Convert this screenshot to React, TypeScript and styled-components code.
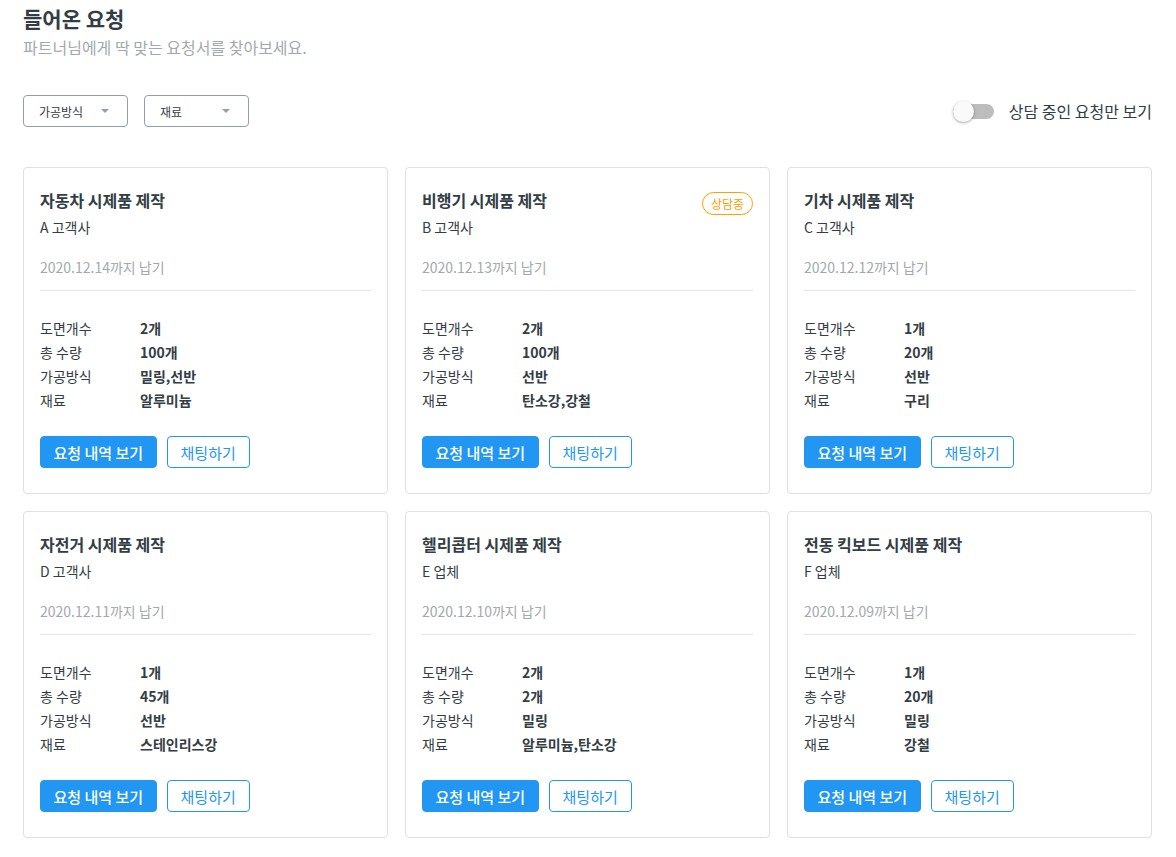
import React from "react";
import styled, { createGlobalStyle } from "styled-components";

const Global = createGlobalStyle`
  html, body { margin: 0; padding: 0; background: #fff; }
  body { font-family: "Noto Sans CJK KR", "Noto Sans", sans-serif; color: #323d45; }
  * { box-sizing: border-box; }
`;

const Page = styled.div`
  padding: 2px 24px 20px 23px;
`;

const Title = styled.h1`
  margin: 0;
  font-size: 21px;
  line-height: 32px;
  font-weight: 700;
  color: #323d45;
`;

const Subtitle = styled.p`
  margin: 0;
  font-size: 16px;
  line-height: 26px;
  color: #a2a9ad;
`;

const Toolbar = styled.div`
  display: flex;
  align-items: center;
  justify-content: space-between;
  margin-top: 35px;
`;

const Filters = styled.div`
  display: flex;
  gap: 16px;
`;

const Select = styled.div`
  width: 105px;
  height: 32px;
  border: 1px solid #939fa5;
  border-radius: 4px;
  display: flex;
  align-items: center;
  justify-content: space-between;
  padding: 0 18px 0 15px;
  font-size: 12px;
  color: #323d45;
`;

const Caret = styled.span`
  width: 0;
  height: 0;
  border-left: 4px solid transparent;
  border-right: 4px solid transparent;
  border-top: 4px solid #939fa5;
`;

const ToggleWrap = styled.label`
  display: flex;
  align-items: center;
  gap: 15px;
  font-size: 16px;
  color: #323d45;
`;

const Track = styled.span`
  position: relative;
  width: 41px;
  height: 15px;
  border-radius: 8px;
  background: #bdbdbd;
`;

const Thumb = styled.span`
  position: absolute;
  left: 0;
  top: -3px;
  width: 21px;
  height: 21px;
  border-radius: 50%;
  background: #fafafa;
  box-shadow: 0 1px 3px rgba(0, 0, 0, 0.35);
`;

const Grid = styled.div`
  display: grid;
  grid-template-columns: repeat(3, 1fr);
  gap: 17px;
  margin-top: 40px;
`;

const Card = styled.div`
  border: 1px solid #e0e0e0;
  border-radius: 4px;
  padding: 19px 16px 25px 16px;
  display: flex;
  flex-direction: column;
`;

const CardHead = styled.div`
  display: flex;
  justify-content: space-between;
  align-items: flex-start;
  height: 26px;
`;

const CardTitle = styled.div`
  font-size: 16px;
  font-weight: 700;
  line-height: 26px;
  color: #323d45;
`;

const Badge = styled.span`
  margin-top: 5px;
  height: 23px;
  padding: 0 8px;
  border: 1px solid #ffa000;
  border-radius: 12px;
  color: #ffa000;
  font-size: 12px;
  line-height: 21px;
`;

const Client = styled.div`
  margin-top: 2px;
  font-size: 14px;
  line-height: 24px;
  color: #323d45;
`;

const Due = styled.div`
  margin-top: 16px;
  font-size: 14px;
  line-height: 24px;
  color: #a2a9ad;
  padding-bottom: 11px;
  border-bottom: 1px solid #e5e5e5;
`;

const Specs = styled.div`
  display: grid;
  grid-template-columns: 100px 1fr;
  margin-top: 25px;
  font-size: 14px;
  line-height: 24px;
`;

const Label = styled.span`
  color: #323d45;
`;

const Value = styled.span`
  font-weight: 700;
  color: #323d45;
`;

const Actions = styled.div`
  display: flex;
  gap: 10px;
  margin-top: 24px;
`;

const Button = styled.button<{ $primary?: boolean }>`
  height: 32px;
  padding: 0 ${(p) => (p.$primary ? "12.5px" : "13px")};
  border-radius: 4px;
  font-family: inherit;
  font-size: 15px;
  border: 1px solid #2196f3;
  background: ${(p) => (p.$primary ? "#2196f3" : "#fff")};
  color: ${(p) => (p.$primary ? "#fff" : "#2196f3")};
  font-weight: ${(p) => (p.$primary ? 500 : 400)};
  cursor: pointer;
`;

type Req = {
  title: string;
  client: string;
  due: string;
  count: string;
  amount: string;
  method: string;
  material: string;
  consulting?: boolean;
};

const data: Req[] = [
  { title: "자동차 시제품 제작", client: "A 고객사", due: "2020.12.14", count: "2개", amount: "100개", method: "밀링,선반", material: "알루미늄" },
  { title: "비행기 시제품 제작", client: "B 고객사", due: "2020.12.13", count: "2개", amount: "100개", method: "선반", material: "탄소강,강철", consulting: true },
  { title: "기차 시제품 제작", client: "C 고객사", due: "2020.12.12", count: "1개", amount: "20개", method: "선반", material: "구리" },
  { title: "자전거 시제품 제작", client: "D 고객사", due: "2020.12.11", count: "1개", amount: "45개", method: "선반", material: "스테인리스강" },
  { title: "헬리콥터 시제품 제작", client: "E 업체", due: "2020.12.10", count: "2개", amount: "2개", method: "밀링", material: "알루미늄,탄소강" },
  { title: "전동 킥보드 시제품 제작", client: "F 업체", due: "2020.12.09", count: "1개", amount: "20개", method: "밀링", material: "강철" },
];

export default function App() {
  return (
    <>
      <Global />
      <Page>
        <Title>들어온 요청</Title>
        <Subtitle>파트너님에게 딱 맞는 요청서를 찾아보세요.</Subtitle>
        <Toolbar>
          <Filters>
            <Select>
              가공방식 <Caret />
            </Select>
            <Select>
              재료 <Caret />
            </Select>
          </Filters>
          <ToggleWrap>
            <Track>
              <Thumb />
            </Track>
            상담 중인 요청만 보기
          </ToggleWrap>
        </Toolbar>
        <Grid>
          {data.map((r) => (
            <Card key={r.title}>
              <CardHead>
                <CardTitle>{r.title}</CardTitle>
                {r.consulting && <Badge>상담중</Badge>}
              </CardHead>
              <Client>{r.client}</Client>
              <Due>{r.due}까지 납기</Due>
              <Specs>
                <Label>도면개수</Label>
                <Value>{r.count}</Value>
                <Label>총 수량</Label>
                <Value>{r.amount}</Value>
                <Label>가공방식</Label>
                <Value>{r.method}</Value>
                <Label>재료</Label>
                <Value>{r.material}</Value>
              </Specs>
              <Actions>
                <Button $primary>요청 내역 보기</Button>
                <Button>채팅하기</Button>
              </Actions>
            </Card>
          ))}
        </Grid>
      </Page>
    </>
  );
}
